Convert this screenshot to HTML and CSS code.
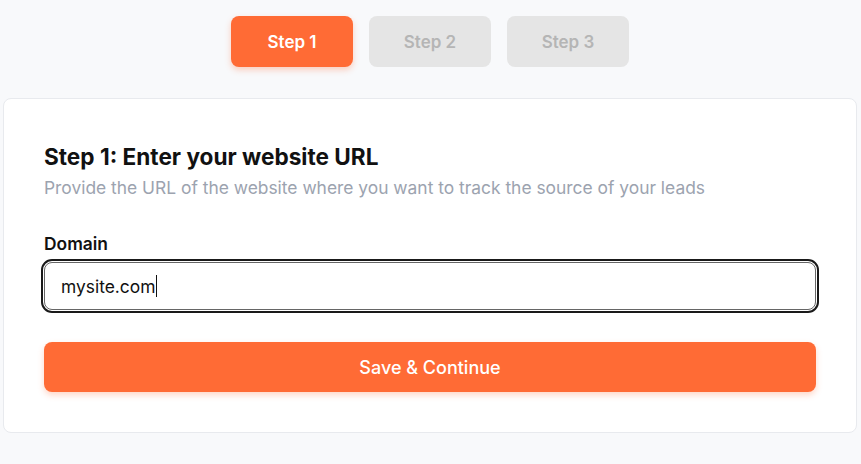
FILE: index.html
```html
<!DOCTYPE html>
<html lang="en">
<head>
<meta charset="utf-8">
<title>Setup</title>
<link rel="stylesheet" href="styles.css">
</head>
<body>
<div class="page">
  <nav class="steps">
    <button class="step active">Step 1</button>
    <button class="step">Step 2</button>
    <button class="step">Step 3</button>
  </nav>
  <section class="card">
    <h1 class="title">Step 1: Enter your website URL</h1>
    <p class="subtitle">Provide the URL of the website where you want to track the source of your leads</p>
    <label class="label" for="domain">Domain</label>
    <div class="field"><span class="value">mysite.com</span><span class="caret"></span></div>
    <button class="primary">Save &amp; Continue</button>
  </section>
</div>
</body>
</html>
```
FILE: styles.css
```css
* { box-sizing: border-box; }
html, body { margin: 0; padding: 0; }
body {
  background: #f8f9fb;
  font-family: Inter, "Noto Sans", sans-serif;
  color: #111;
  width: 861px;
  height: 464px;
  overflow: hidden;
}
.page {
  padding: 16px 4px 0 3px;
}
.steps {
  display: flex;
  justify-content: center;
  gap: 16px;
}
.step {
  width: 122px;
  height: 51px;
  border: none;
  border-radius: 8px;
  font-family: inherit;
  font-size: 17px;
  font-weight: 600;
  background: #e5e5e5;
  color: #b5b5b5;
}
.step.active {
  background: #ff6b35;
  color: #fff;
  box-shadow: 0 3px 6px rgba(255, 107, 53, 0.3);
}
.card {
  margin-top: 31px;
  background: #fff;
  border: 1px solid #e8eaee;
  border-radius: 8px;
  padding: 43px 40px 40px 40px;
  display: flex;
  flex-direction: column;
}
.title {
  margin: 0;
  font-size: 22.6px;
  line-height: 30px;
  font-weight: 700;
  color: #111;
}
.subtitle {
  margin: 3px 0 0;
  font-size: 17.4px;
  line-height: 26px;
  color: #9ca3af;
}
.label {
  margin-top: 30px;
  font-size: 17.4px;
  line-height: 26px;
  font-weight: 600;
  color: #111;
}
.field {
  margin-top: 5px;
  height: 48px;
  border: 1px solid #666;
  border-radius: 8px;
  outline: 2px solid #1a1a1a;
  outline-offset: 1px;
  display: flex;
  align-items: center;
  padding: 0 16px;
  font-size: 17.4px;
  color: #111;
}
.caret {
  display: inline-block;
  width: 1px;
  height: 22px;
  background: #111;
  margin-left: 1px;
}
.primary {
  margin-top: 32px;
  height: 50px;
  border: none;
  border-radius: 8px;
  background: #ff6b35;
  color: #fff;
  font-family: inherit;
  font-size: 18px;
  font-weight: 500;
  box-shadow: 0 3px 6px rgba(255, 107, 53, 0.28);
}
```
